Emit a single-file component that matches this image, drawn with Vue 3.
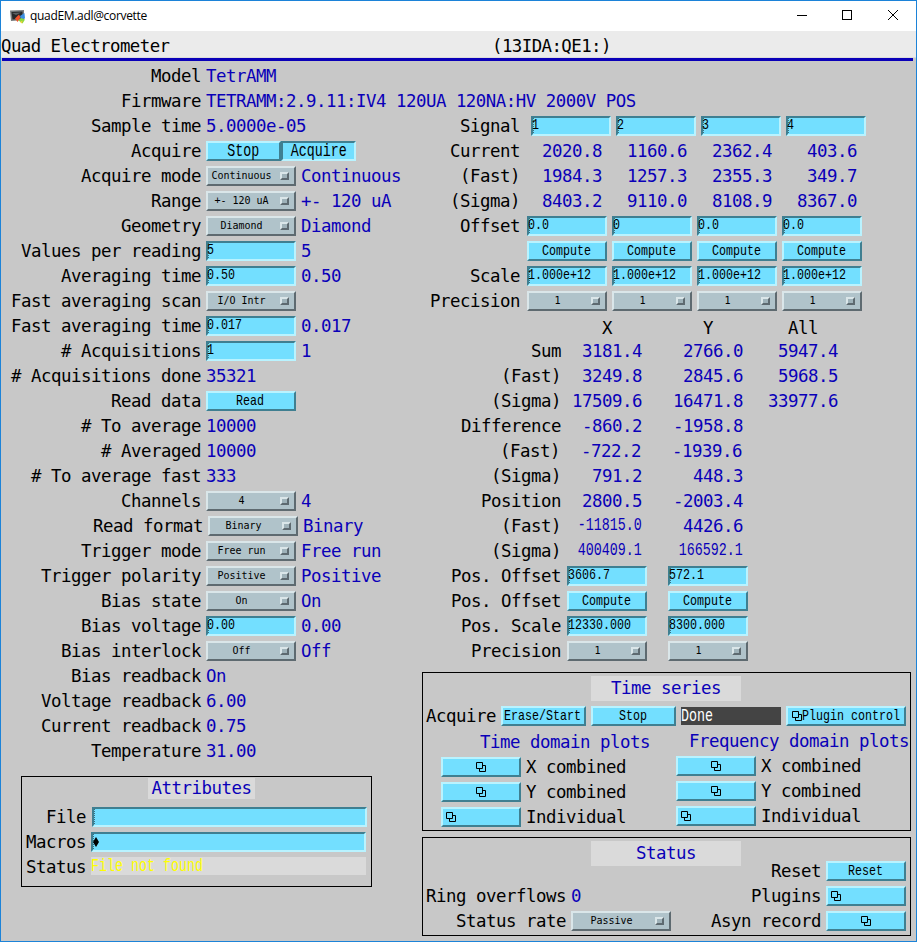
<script setup>
const leftRows = [
  { label: 'Model', text: 'TetrAMM' },
  { label: 'Firmware', text: 'TETRAMM:2.9.11:IV4 120UA 120NA:HV 2000V POS' },
  { label: 'Sample time', text: '5.0000e-05' },
  { label: 'Acquire', choice: true },
  { label: 'Acquire mode', menu: 'Continuous', value: 'Continuous' },
  { label: 'Range', menu: '+- 120 uA', value: '+- 120 uA' },
  { label: 'Geometry', menu: 'Diamond', value: 'Diamond' },
  { label: 'Values per reading', field: '5', value: '5' },
  { label: 'Averaging time', field: '0.50', value: '0.50' },
  { label: 'Fast averaging scan', menu: 'I/O Intr' },
  { label: 'Fast averaging time', field: '0.017', value: '0.017' },
  { label: '# Acquisitions', field: '1', value: '1' },
  { label: '# Acquisitions done', text: '35321' },
  { label: 'Read data', button: 'Read' },
  { label: '# To average', text: '10000' },
  { label: '# Averaged', text: '10000' },
  { label: '# To average fast', text: '333' },
  { label: 'Channels', menu: '4', value: '4' },
  { label: 'Read format', menu: 'Binary', value: 'Binary', shifted: true },
  { label: 'Trigger mode', menu: 'Free run', value: 'Free run' },
  { label: 'Trigger polarity', menu: 'Positive', value: 'Positive' },
  { label: 'Bias state', menu: 'On', value: 'On' },
  { label: 'Bias voltage', field: '0.00', value: '0.00' },
  { label: 'Bias interlock', menu: 'Off', value: 'Off' },
  { label: 'Bias readback', text: 'On' },
  { label: 'Voltage readback', text: '6.00' },
  { label: 'Current readback', text: '0.75' },
  { label: 'Temperature', text: '31.00' },
]

const signalRows = [
  { label: 'Signal', kind: 'field', cells: ['1', '2', '3', '4'], wide: true },
  { label: 'Current', kind: 'value', cells: ['2020.8', '1160.6', '2362.4', '403.6'] },
  { label: '(Fast)', kind: 'value', cells: ['1984.3', '1257.3', '2355.3', '349.7'] },
  { label: '(Sigma)', kind: 'value', cells: ['8403.2', '9110.0', '8108.9', '8367.0'] },
  { label: 'Offset', kind: 'field', cells: ['0.0', '0', '0.0', '0.0'] },
  { label: '', kind: 'button', cells: ['Compute', 'Compute', 'Compute', 'Compute'] },
  { label: 'Scale', kind: 'field', cells: ['1.000e+12', '1.000e+12', '1.000e+12', '1.000e+12'] },
  { label: 'Precision', kind: 'menu', cells: ['1', '1', '1', '1'] },
]

const positionRows = [
  { label: 'Sum', kind: 'value', cells: ['3181.4', '2766.0', '5947.4'] },
  { label: '(Fast)', kind: 'value', cells: ['3249.8', '2845.6', '5968.5'] },
  { label: '(Sigma)', kind: 'value', cells: ['17509.6', '16471.8', '33977.6'] },
  { label: 'Difference', kind: 'value', cells: ['-860.2', '-1958.8'] },
  { label: '(Fast)', kind: 'value', cells: ['-722.2', '-1939.6'], nudged: true },
  { label: '(Sigma)', kind: 'value', cells: ['791.2', '448.3'] },
  { label: 'Position', kind: 'value', cells: ['2800.5', '-2003.4'] },
  { label: '(Fast)', kind: 'value', cells: ['-11815.0', '4426.6'] },
  { label: '(Sigma)', kind: 'value', cells: ['400409.1', '166592.1'] },
  { label: 'Pos. Offset', kind: 'field', cells: ['3606.7', '572.1'] },
  { label: 'Pos. Offset', kind: 'button', cells: ['Compute', 'Compute'] },
  { label: 'Pos. Scale', kind: 'field', cells: ['12330.000', '8300.000'] },
  { label: 'Precision', kind: 'menu', cells: ['1', '1'] },
]

const plotGroups = [
  { title: 'Time domain plots', cls: 'time' },
  { title: 'Frequency domain plots', cls: 'freq' },
]
const plots = ['X combined', 'Y combined', 'Individual']
</script>

<template>
  <div class="window">
    <header class="titlebar">
      <svg class="app-icon" width="16" height="14" viewBox="0 0 16 14">
        <path d="M0 0.5L14 0V10L1 11Z" fill="#777c7e" />
        <path d="M1.5 2L12.5 1.5V8.5L2.5 9.5Z" fill="#26292b" />
        <path d="M2 3L11 2.5L6 5Z" fill="#5b6064" />
        <path d="M5 8.500L9 4.500L10.500 7.500L7.500 12Z" fill="#f0532d" />
        <path d="M10 6L14.500 3L15 8.500L11 9.500Z" fill="#3b8fe0" />
        <path d="M8.500 10.500L11 8L15 9.500L12.500 13.500Z" fill="#8bd83a" />
        <path d="M10 12L12.500 10.500L12 13.500Z" fill="#f5d33b" />
      </svg>
      <span class="title">quadEM.adl@corvette</span>
      <svg class="controls" width="102" height="12" viewBox="0 0 102 12" fill="none" stroke="#000">
        <path d="M0 6.500H10" />
        <rect x="45.500" y="1.500" width="9" height="9" />
        <path d="M91 1L101 11M101 1L91 11" />
      </svg>
    </header>
    <div class="heading">
      <span class="name">Quad Electrometer</span>
      <span>(13IDA:QE1:)</span>
    </div>
    <div class="rule"></div>

    <main class="body">
      <section class="left">
        <div class="rows">
          <div v-for="(r, i) in leftRows" :key="i" class="row" :class="{ shifted: r.shifted }">
            <span class="label">{{ r.label }}</span>
            <span v-if="r.text" class="val">{{ r.text }}</span>
            <div v-if="r.choice" class="choice">
              <div class="btn big"><span class="tall">Stop</span></div>
              <div class="btn big pressed"><span class="tall">Acquire</span></div>
            </div>
            <div v-if="r.menu" class="menu"><span>{{ r.menu }}</span><i></i></div>
            <div v-if="r.field" class="field"><span class="mid">{{ r.field }}</span></div>
            <div v-if="r.button" class="btn"><span class="mid">{{ r.button }}</span></div>
            <span v-if="r.value" class="val">{{ r.value }}</span>
          </div>
        </div>

        <section class="panel attributes">
          <h2>Attributes</h2>
          <div class="attr file"><span class="label">File</span><div class="field"></div></div>
          <div class="attr"><span class="label">Macros</span>
            <div class="field">
              <svg class="diamond" width="6" height="10" viewBox="0 0 6 10"><path d="M3 0L6 5L3 10L0 5Z" /></svg>
            </div>
          </div>
          <div class="attr"><span class="label">Status</span><div class="message"><span class="tall">File not found</span></div></div>
        </section>
      </section>

      <section class="right">
        <div class="rows signals">
          <div v-for="(r, i) in signalRows" :key="i" class="row">
            <span class="label">{{ r.label }}</span>
            <div class="cells" :class="['of-' + r.kind, { wide: r.wide }]">
              <template v-for="(c, j) in r.cells" :key="j">
                <span v-if="r.kind === 'value'" class="num">{{ c }}</span>
                <div v-else-if="r.kind === 'field'" class="field"><span class="mid">{{ c }}</span></div>
                <div v-else-if="r.kind === 'button'" class="btn"><span class="mid">{{ c }}</span></div>
                <div v-else class="menu"><span>{{ c }}</span><i></i></div>
              </template>
            </div>
          </div>
        </div>

        <div class="axes"><span>X</span><span>Y</span><span>All</span></div>

        <div class="rows positions">
          <div v-for="(r, i) in positionRows" :key="i" class="row" :class="{ nudged: r.nudged }">
            <span class="label">{{ r.label }}</span>
            <div class="cells" :class="'of-' + r.kind">
              <template v-for="(c, j) in r.cells" :key="j">
                <span v-if="r.kind === 'value'" class="num">
                  <span :class="{ tall: c.length > 7 }">{{ c }}</span>
                </span>
                <div v-else-if="r.kind === 'field'" class="field"><span class="mid">{{ c }}</span></div>
                <div v-else-if="r.kind === 'button'" class="btn"><span class="mid">{{ c }}</span></div>
                <div v-else class="menu"><span>{{ c }}</span><i></i></div>
              </template>
            </div>
          </div>
        </div>

        <section class="panel series">
          <h2>Time series</h2>
          <div class="acquire">
            <span class="label">Acquire</span>
            <div class="btn"><span class="mid">Erase/Start</span></div>
            <div class="btn"><span class="mid">Stop</span></div>
            <div class="done"><span class="tall">Done</span></div>
            <div class="btn plugin">
              <svg class="copies" width="10" height="10" viewBox="0 0 10 10"><path d="M.5 .5H6.500V6.500H.5ZM7 3.500H9.500V9.500H3.500V7" /></svg>
              <span class="mid">Plugin control</span>
            </div>
          </div>
          <div class="plots">
            <div v-for="g in plotGroups" :key="g.title" class="group" :class="g.cls">
              <h3>{{ g.title }}</h3>
              <div v-for="(p, i) in plots" :key="p" class="plot">
                <div class="btn" :class="{ start: i === 2 }">
                  <svg class="copies" width="10" height="10" viewBox="0 0 10 10"><path d="M.5 .5H6.500V6.500H.5ZM7 3.500H9.500V9.500H3.500V7" /></svg>
                </div>
                <span>{{ p }}</span>
              </div>
            </div>
          </div>
        </section>

        <section class="panel status">
          <h2>Status</h2>
          <div class="status-grid">
            <div class="status-left">
              <div class="row"><span class="label">Ring overflows</span><span class="val">0</span></div>
              <div class="row"><span class="label">Status rate</span><div class="menu"><span>Passive</span><i></i></div></div>
            </div>
            <div class="status-right">
              <div class="row"><span class="label">Reset</span><div class="btn"><span class="mid">Reset</span></div></div>
              <div class="row"><span class="label">Plugins</span>
                <div class="btn start">
                  <svg class="copies" width="10" height="10" viewBox="0 0 10 10"><path d="M.5 .5H6.500V6.500H.5ZM7 3.500H9.500V9.500H3.500V7" /></svg>
                </div>
              </div>
              <div class="row"><span class="label">Asyn record</span>
                <div class="btn">
                  <svg class="copies" width="10" height="10" viewBox="0 0 10 10"><path d="M.5 .5H6.500V6.500H.5ZM7 3.500H9.500V9.500H3.500V7" /></svg>
                </div>
              </div>
            </div>
          </div>
        </section>
      </section>
    </main>
  </div>
</template>

<style>
body { margin: 0; overflow: hidden; }
</style>

<style scoped>
.window, .window * { box-sizing: border-box; }
.window {
  width: 917px; height: 942px; border: 1px solid #1c83d8; background: #c8c8c8;
  display: flex; flex-direction: column; overflow: hidden;
  font-family: "DejaVu Sans Mono", "Liberation Mono", monospace;
  font-size: 17.4px; letter-spacing: -0.475px; line-height: 20px; color: #000; white-space: nowrap;
}
.titlebar { height: 30px; flex: none; background: #fff; display: flex; align-items: center; padding: 0 17px 0 9px; }
.app-icon { flex: none; margin-top: 1px; }
.title { font: 12px/20px "Open Sans", "Noto Sans", sans-serif; letter-spacing: -0.32px; margin-left: 4px; flex: 1; }
.controls { flex: none; margin-top: -2px; }
.heading { height: 27px; flex: none; background: #ebebeb; display: flex; align-items: center; border-bottom: 1px solid #dcdcdc; padding-top: 3px; letter-spacing: -0.56px; }
.heading .name { width: 491px; }
.rule { height: 3px; flex: none; background: #0a00b8; margin: 0 3px 0 1px; }
.body { display: flex; flex: 1; }
.left { width: 421px; flex: none; padding-top: 5px; }
.right { width: 489px; flex: none; padding-top: 55px; }
.rows { display: flex; flex-direction: column; gap: 5px; }
.row { display: flex; height: 20px; }
.label { text-align: right; flex: none; }
.left .row > .label { width: 200px; }
.left .row > .val { margin-left: 5px; color: #0a00b8; }
.left .row > .field, .left .row > .menu, .left .row > .btn { width: 90px; margin-left: 5px; }
.left .row.shifted { padding-left: 2px; }
.choice { display: flex; width: 150px; margin-left: 5px; }
.choice .btn { width: 75px; }

.btn, .field, .menu { height: 20px; flex: none; border: 2px solid; display: flex; align-items: center; }
.btn { background: #73dfff; border-color: #b9f3ff #3f7f91 #3f7f91 #b9f3ff; justify-content: center; }
.btn.pressed { border-color: #3f7f91 #b9f3ff #b9f3ff #3f7f91; }
.btn.start { justify-content: flex-start; padding-left: 3px; }
.field { background: #73dfff; border-color: #3f7f91 #b9f3ff #b9f3ff #3f7f91; position: relative; }
.field::before { content: ""; position: absolute; left: 0; top: 0; height: 15px; border-left: 1px dotted #000; opacity: .5; }
.field .mid { margin: 0 0 0 -1px; }
.menu { background: #b0c3ca; border-color: #dae6e9 #5e6a70 #5e6a70 #dae6e9; font-size: 10px; letter-spacing: -0.02px; line-height: 14px; }
.menu span { flex: 1; text-align: center; padding-bottom: 1px; }
.menu i { width: 9px; height: 8px; margin: 0 5px; background: #9fb2b9; border: 2px solid; border-color: #dae6e9 #5e6a70 #5e6a70 #dae6e9; }
.mid {
  display: inline-block; font-family: "Liberation Mono", monospace; font-size: 15px; line-height: 16px;
  letter-spacing: 0; transform: scaleX(.7777); transform-origin: left center;
}
.tall {
  display: inline-block; font-family: "Liberation Mono", monospace; font-size: 18.5px; line-height: 18px;
  letter-spacing: 0; transform: scaleX(.7206); transform-origin: left center;
}
.btn .tall, .btn .mid { flex: none; transform-origin: center; }
.btn .tall { margin-top: 2px; }
.btn .mid { margin: 1px 0 0 -1px; }
.btn.plugin { justify-content: flex-start; padding-left: 4px; }
.btn.plugin .mid { transform-origin: left center; margin-left: 0; width: 98px; }
.copies { flex: none; }
.copies path { fill: none; stroke: #000; }

.cells { display: flex; }
.num { text-align: right; color: #0a00b8; }
.num .tall { transform-origin: right center; margin: 1px 0 0 -20px; vertical-align: top; }
.signals .label { width: 98px; }
.signals .cells { gap: 5px; margin-left: 7px; }
.signals .cells.wide { margin-left: 11px; }
.signals .cells.of-value { margin-left: 2px; }
.cells > * { width: 80px; }
.axes { display: flex; margin: 7px 0 3px 145px; text-align: center; }
.axes span { width: 80px; }
.axes span:nth-child(2) { margin-left: 21px; }
.axes span:nth-child(3) { margin-left: 15px; }
.positions .label { width: 139px; }
.positions .nudged .label { width: 138px; }
.positions .cells { gap: 21px; margin-left: 6px; }
.positions .cells.of-value { gap: 0; margin-left: 0; }
.positions .of-value .num:nth-child(1) { width: 81px; }
.positions .of-value .num:nth-child(2) { width: 101px; }
.positions .of-value .num:nth-child(3) { width: 95px; }

.panel { border: 1px solid #000; }
h2 { margin: 0 auto; background: #dadada; color: #0a00b8; font: inherit; text-align: center; }
h3 { margin: 0; color: #0a00b8; font: inherit; }

.attributes { width: 351px; height: 111px; margin: 15px 0 0 20px; padding: 1px 0 0 3px; display: flex; flex-direction: column; }
.attributes h2 { width: 107px; height: 21px; margin-left: 123px; margin-bottom: 8px; line-height: 21px; }
.attr { display: flex; height: 20px; margin-bottom: 5px; }
.attr .label { width: 61px; margin-right: 5px; }
.attr.file .field { margin-left: 1px; }
.attr .field, .message { width: 275px; }
.message { height: 18px; background: #dadada; color: #ff0; }
.message .tall, .done .tall { line-height: 20px; vertical-align: top; }

.series { height: 159px; margin-top: 11px; padding: 3px 0 0 3px; }
.series h2, .status h2 { width: 150px; height: 25px; line-height: 25px; }
.series h2 { margin-left: 165px; }
.acquire { display: flex; gap: 5px; margin-top: 5px; }
.acquire .label { width: 70px; }
.acquire .btn { width: 85px; }
.acquire .btn.plugin { width: 120px; }
.done { width: 100px; height: 18px; margin-top: 1px; background: #444; color: #fff; }
.plots { display: flex; }
.group { width: 235px; padding: 6px 0 0 15px; }
.group.freq { padding-top: 5px; }
.group h3 { margin-bottom: 5px; padding-left: 39px; }
.group.freq h3 { padding-left: 13px; }
.plot { display: flex; gap: 5px; height: 20px; margin-bottom: 5px; }
.plot .btn { width: 80px; }

.status { height: 99px; margin-top: 6px; padding: 3px 0 0 3px; }
.status h2 { margin-left: 165px; }
.status-grid { display: flex; justify-content: space-between; padding-right: 4px; }
.status-left, .status-right { display: flex; flex-direction: column; gap: 5px; }
.status-left { padding-top: 20px; }
.status-left .label { width: 140px; margin-right: 5px; }
.status-left .val { color: #0a00b8; }
.status-left .menu { width: 100px; }
.status-right { margin-top: -5px; }
.status-right .label { width: 115px; margin-right: 5px; }
.status-right .btn { width: 80px; }
</style>
